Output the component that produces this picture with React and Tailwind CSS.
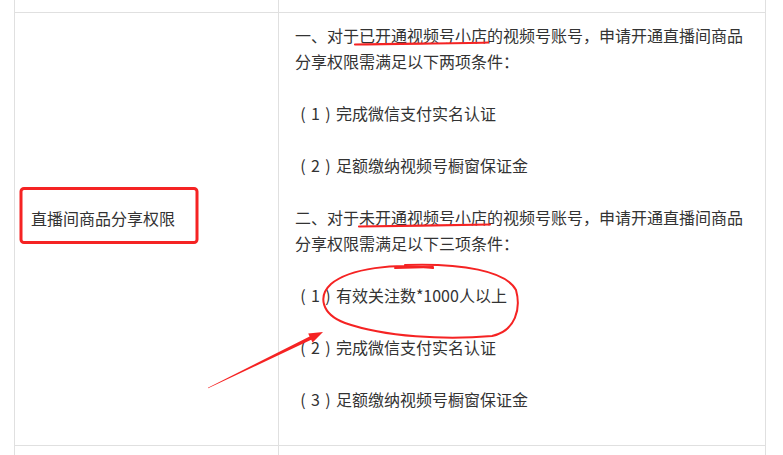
import React from 'react';

// Annotation overlay: hand-drawn red marks over the table
const Marks = () => (
  <svg className="absolute inset-0 pointer-events-none" width="783" height="455" viewBox="0 0 783 455">
    <g fill="none" stroke="#f52323" strokeLinecap="round" strokeLinejoin="round">
      <rect x="21" y="188.5" width="176" height="54" rx="3" strokeWidth="3" />
      <path d="M355 44.5 C 400 43.5, 450 43.5, 488 42.5" strokeWidth="2.2" />
      <path d="M359 226.5 C 400 225.5, 450 225.5, 490 224.5" strokeWidth="2.2" />
      <path d="M395 268 L 433 267" strokeWidth="2" />
      <path d="M433 268 C 395 263, 350 268, 331 284 C 318 296, 321 314, 345 323 C 385 337, 445 340, 492 336 C 516 331, 521 308, 516 290 C 506 271, 462 263, 405 265" strokeWidth="2" />
    </g>
    <polygon
      fill="#f52323"
      points="208.1,388.3 311.2,339.7 312.6,342.6 323,332 308.2,333.6 309.6,336.5 207.9,387.7"
    />
  </svg>
);

// full-width brackets drawn centred in their 1em box, as in the screenshot
const P = ({ c }) => <span className="inline-block w-[16px] text-center">{c}</span>;

const Item = ({ n, text }) => (
  <p>
    <P c="(" />
    {n}
    <P c=")" />
    {text}
  </p>
);

export default function App() {
  return (
    <div
      className="relative w-[783px] h-[455px] overflow-hidden bg-white text-[#333] text-[16px] leading-[26px]"
      style={{ fontFamily: '"Noto Sans CJK SC", "Microsoft YaHei", sans-serif' }}
    >
      <div className="ml-[14px] w-[752px] border-l border-r border-[#e0e0e0]">
        {/* previous row, cut off */}
        <div className="flex h-[13px] border-b border-[#e0e0e0]">
          <div className="w-[264px] border-r border-[#e0e0e0]" />
          <div className="flex-1" />
        </div>

        <div className="flex h-[433px] border-b border-[#e0e0e0]">
          <div className="w-[264px] border-r border-[#e0e0e0] flex items-center pl-[16px] pb-[22px]">
            <p>直播间商品分享权限</p>
          </div>
          <div className="flex-1 pt-[9px] pl-[16px] pr-[16px] flex flex-col gap-[26px]">
            <p>一、对于已开通视频号小店的视频号账号，申请开通直播间商品分享权限需满足以下两项条件：</p>
            <Item n="1" text="完成微信支付实名认证" />
            <Item n="2" text="足额缴纳视频号橱窗保证金" />
            <p>二、对于未开通视频号小店的视频号账号，申请开通直播间商品分享权限需满足以下三项条件：</p>
            <Item n="1" text="有效关注数*1000人以上" />
            <Item n="2" text="完成微信支付实名认证" />
            <Item n="3" text="足额缴纳视频号橱窗保证金" />
          </div>
        </div>

        {/* next row */}
        <div className="flex h-[20px]">
          <div className="w-[264px] border-r border-[#e0e0e0]" />
          <div className="flex-1" />
        </div>
      </div>
      <Marks />
    </div>
  );
}
